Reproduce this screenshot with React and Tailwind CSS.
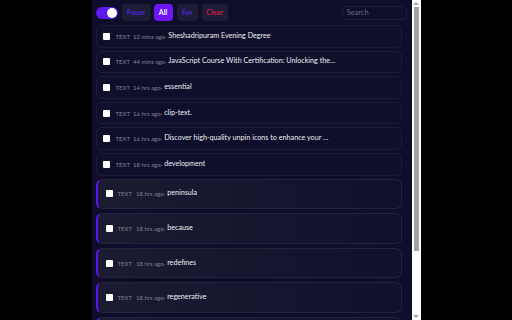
import React, { useState } from 'react';

const recent = [
  { ago: '12 mins ago', title: 'Sheshadripuram Evening Degree' },
  { ago: '44 mins ago', title: 'JavaScript Course With Certification: Unlocking the Power of Code' },
  { ago: '14 hrs ago', title: 'essential' },
  { ago: '16 hrs ago', title: 'clip-text.' },
  { ago: '16 hrs ago', title: 'Discover high-quality unpin icons to enhance your designs' },
  { ago: '18 hrs ago', title: 'development' },
];

const pinned = [
  { ago: '18 hrs ago', title: 'peninsula' },
  { ago: '18 hrs ago', title: 'because' },
  { ago: '18 hrs ago', title: 'redefines' },
  { ago: '18 hrs ago', title: 'regenerative' },
  { ago: '18 hrs ago', title: 'framework' },
];

function Row({ item, pinned }) {
  if (pinned) {
    return (
      <div className="h-[30.6px] mb-[4px] flex items-center pl-[8px] rounded-[6px] border border-[#23233a] border-l-2 border-l-[#5a14ee] bg-gradient-to-r from-[#1b1b31] to-[#10102c]">
        <span className="w-[7px] h-[7px] bg-white rounded-[1px] shrink-0" />
        <span className="ml-[5px] text-[6px] text-[#80808e]">TEXT</span>
        <span className="ml-[4px] text-[6px] text-[#80808e] whitespace-nowrap">{item.ago}·</span>
        <span className="ml-[2px] text-[7.2px] text-[#ececf2] truncate max-w-[170px]">{item.title}</span>
      </div>
    );
  }
  return (
    <div className="h-[22.6px] mb-[3px] flex items-center pl-[6px] rounded-[5px] border border-[#1c1c38] bg-[#0f0f2c]">
      <span className="w-[7px] h-[7px] bg-white rounded-[1px] shrink-0" />
      <span className="ml-[6px] text-[6px] text-[#80808e]">TEXT</span>
      <span className="ml-[3px] text-[6px] text-[#80808e] whitespace-nowrap">{item.ago}·</span>
      <span className="ml-[2px] text-[7.2px] text-[#ececf2] truncate max-w-[168px]">{item.title}</span>
    </div>
  );
}

function Scrollbar() {
  return (
    <div className="w-[9px] h-full bg-white flex flex-col items-center shrink-0">
      <div className="h-[7px] flex items-center justify-center">
        <span className="w-0 h-0 border-x-[3px] border-x-transparent border-b-[3px] border-b-[#a3a3a3]" />
      </div>
      <div className="w-[5px] h-[244px] bg-[#a3a3a3]" />
      <div className="flex-1" />
      <div className="h-[7px] flex items-center justify-center">
        <span className="w-0 h-0 border-x-[3px] border-x-transparent border-t-[3px] border-t-[#a3a3a3]" />
      </div>
    </div>
  );
}

export default function App() {
  const [on, setOn] = useState(true);
  const [search, setSearch] = useState('');

  return (
    <div className="h-[320px] bg-black flex justify-center font-['Lato',sans-serif]">
      <div className="w-[329px] h-full flex">
        <div className="flex-1 h-full bg-[#0e0e2b] overflow-hidden">
          {/* toolbar */}
          <div className="flex items-center h-[21px] mt-[2px] pl-[4px] pr-[5px]">
            <button
              onClick={() => setOn(!on)}
              className="w-[22px] h-[12px] rounded-full bg-[#5b1bf0] flex items-center justify-end px-[1px]"
            >
              <span className="w-[10px] h-[10px] rounded-full bg-white" />
            </button>
            <button className="ml-[4px] w-[29px] h-[17px] rounded-[4px] bg-[#1d1d36] text-[7px] font-bold text-[#4f22d6]">Pause</button>
            <button className="ml-[3px] w-[19px] h-[17px] rounded-[4px] bg-[#6a16f6] text-[7px] font-bold text-white">All</button>
            <button className="ml-[4px] w-[21px] h-[17px] rounded-[4px] bg-[#1d1d36] text-[7px] font-bold text-[#4f22d6]">Fav</button>
            <button className="ml-[4px] w-[26px] h-[17px] rounded-[4px] bg-[#1d1d36] text-[7px] font-bold text-[#d01a44]">Clear</button>
            <input
              value={search}
              onChange={(e) => setSearch(e.target.value)}
              placeholder="Search"
              className="ml-auto w-[65px] h-[14px] rounded-[5px] border border-[#1e1e3a] bg-transparent px-[4px] text-[7.5px] text-[#ddd] placeholder:text-[#6a6a7a] outline-none"
            />
          </div>

          {/* list */}
          <div className="pl-[4px] pr-[10px] pt-[2px]">
            {recent.map((item, i) => (
              <Row key={i} item={item} />
            ))}
            {pinned.map((item, i) => (
              <Row key={'p' + i} item={item} pinned />
            ))}
          </div>
        </div>
        <Scrollbar />
      </div>
    </div>
  );
}
